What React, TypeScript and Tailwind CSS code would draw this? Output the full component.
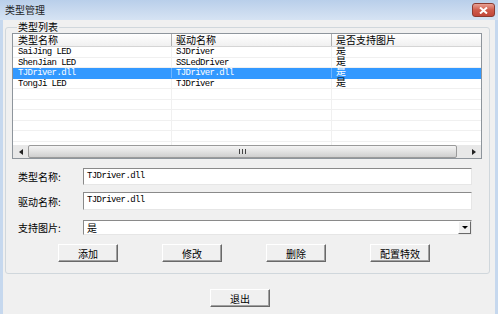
import React from 'react';

const rows = [
  ['SaiJing LED', 'SJDriver', '是'],
  ['ShenJian LED', 'SSLedDriver', '是'],
  ['TJDriver.dll', 'TJDriver.dll', '是'],
  ['TongJi LED', 'TJDriver', '是'],
  ['', '', ''],
  ['', '', ''],
  ['', '', ''],
  ['', '', ''],
  ['', '', ''],
  ['', '', ''],
];

const SELECTED = 2;

function Btn({ label, className = '' }: { label: string; className?: string }) {
  return (
    <div
      className={
        'w-[60px] h-[18px] flex items-center justify-center bg-[#f0f0f0] border border-t-white border-l-white border-b-[#696969] border-r-[#696969] shadow-[inset_-1px_-1px_0_#a0a0a0] text-[10px] text-black ' +
        className
      }
    >
      {label}
    </div>
  );
}

function TextField({ value, h }: { value: string; h: string }) {
  return (
    <div
      className={
        'w-[389px] bg-white border border-t-[#8a8a8a] border-l-[#8a8a8a] border-b-[#e6e6e6] border-r-[#e6e6e6] flex items-center pl-[3px] font-["Liberation_Mono",monospace] text-[9px] tracking-[-0.6px] text-black ' +
        h
      }
    >
      {value}
    </div>
  );
}

export default function App() {
  return (
    <div className="w-[498px] h-[314px] bg-[#c6d8ee] flex flex-col overflow-hidden select-none font-['Noto_Sans_CJK_SC',sans-serif] text-black">
      {/* title bar */}
      <div className="h-[20px] shrink-0 flex items-center justify-between pl-[5px] pr-[3px] bg-gradient-to-b from-[#b9cfea] to-[#d6e3f3]">
        <span className="text-[10px] leading-none text-[#1e1e1e]">类型管理</span>
        <div className="w-[23px] h-[14px] rounded-[3px] border border-[#8b3a30] bg-gradient-to-b from-[#e8a195] via-[#cf5b4b] to-[#c2473a] flex items-center justify-center">
          <svg width="9" height="7" viewBox="0 0 9 7">
            <path d="M1 0.5 L8 6.5 M8 0.5 L1 6.5" stroke="#fff" strokeWidth="2" />
          </svg>
        </div>
      </div>

      {/* client area */}
      <div className="flex-1 mx-[3px] bg-[#f0f0f0] flex flex-col">
        <fieldset className="mt-[1px] ml-[2px] w-[485px] h-[253px] border border-[#d0d7dc] rounded-[3px] px-[6px]">
          <legend className="ml-[5px] px-[1px] text-[10px] leading-[12px]">类型列表</legend>

          {/* list view */}
          <div className="w-[470px] h-[126px] border border-[#8e959c] bg-white flex flex-col">
            <div className="h-[13px] shrink-0 flex bg-gradient-to-b from-[#ffffff] to-[#f0f0f0] border-b border-[#d5d5d5] text-[10px] leading-[12px]">
              <div className="w-[159px] pl-[5px] border-r border-[#b0b0b0]">类型名称</div>
              <div className="w-[160px] pl-[4px] border-r border-[#b0b0b0]">驱动名称</div>
              <div className="flex-1 pl-[4px]">是否支持图片</div>
            </div>
            <div className="flex-1 overflow-hidden">
              {rows.map((r, i) => (
                <div
                  key={i}
                  className={
                    'h-[10.5px] flex border-b font-["Liberation_Mono","Noto_Sans_CJK_SC",monospace] text-[9px] leading-[10px] tracking-[-0.6px] ' +
                    (i === SELECTED ? 'bg-[#3399ff] text-white border-[#3399ff]' : 'border-[#f0f0f0]')
                  }
                >
                  <div className={'w-[159px] pl-[5px] border-r ' + (i === SELECTED ? 'border-[#6fb5ff]' : 'border-[#f0f0f0]')}>{r[0]}</div>
                  <div className={'w-[160px] pl-[4px] border-r ' + (i === SELECTED ? 'border-[#6fb5ff]' : 'border-[#f0f0f0]')}>{r[1]}</div>
                  <div className="flex-1 pl-[4px] text-[10px] tracking-normal">{r[2]}</div>
                </div>
              ))}
            </div>
            {/* horizontal scrollbar */}
            <div className="h-[13px] shrink-0 flex bg-[#e8e8e8]">
              <div className="w-[15px] flex items-center justify-center">
                <svg width="4" height="6" viewBox="0 0 4 6">
                  <path d="M4 0 L0 3 L4 6 Z" fill="#222" />
                </svg>
              </div>
              <div className="w-[429px] rounded-[2px] border border-[#9a9a9a] bg-gradient-to-b from-[#f4f4f4] via-[#e2e2e2] to-[#cfcfcf] flex items-center justify-center">
                <svg width="7" height="5" viewBox="0 0 7 5">
                  <path d="M0.5 0 V5 M3.5 0 V5 M6.5 0 V5" stroke="#444" strokeWidth="1" />
                </svg>
              </div>
              <div className="flex-1" />
              <div className="w-[15px] flex items-center justify-center">
                <svg width="4" height="6" viewBox="0 0 4 6">
                  <path d="M0 0 L4 3 L0 6 Z" fill="#222" />
                </svg>
              </div>
            </div>
          </div>

          {/* form */}
          <div className="pl-[6px] text-[10px]">
            <div className="mt-[9px] flex items-center">
              <span className="w-[65px]">类型名称:</span>
              <TextField value="TJDriver.dll" h="h-[17px]" />
            </div>
            <div className="mt-[7px] flex items-center">
              <span className="w-[65px]">驱动名称:</span>
              <TextField value="TJDriver.dll" h="h-[18px]" />
            </div>
            <div className="mt-[10px] flex items-center">
              <span className="w-[65px]">支持图片:</span>
              <div className="w-[389px] h-[15px] bg-white border border-t-[#8a8a8a] border-l-[#8a8a8a] border-b-[#e6e6e6] border-r-[#e6e6e6] flex items-center">
                <span className="flex-1 pl-[3px] text-[10px] leading-none">是</span>
                <div className="w-[13px] h-[13px] bg-[#f0f0f0] border border-t-white border-l-white border-b-[#696969] border-r-[#696969] flex items-center justify-center">
                  <svg width="6" height="3" viewBox="0 0 6 3">
                    <path d="M0 0 H6 L3 3 Z" fill="#000" />
                  </svg>
                </div>
              </div>
            </div>
          </div>

          <div className="mt-[9px] ml-[46px] flex gap-[44px]">
            <Btn label="添加" />
            <Btn label="修改" />
            <Btn label="删除" />
            <Btn label="配置特效" />
          </div>
        </fieldset>

        <div className="mt-[15px] ml-[207px]">
          <Btn label="退出" />
        </div>
      </div>
    </div>
  );
}
